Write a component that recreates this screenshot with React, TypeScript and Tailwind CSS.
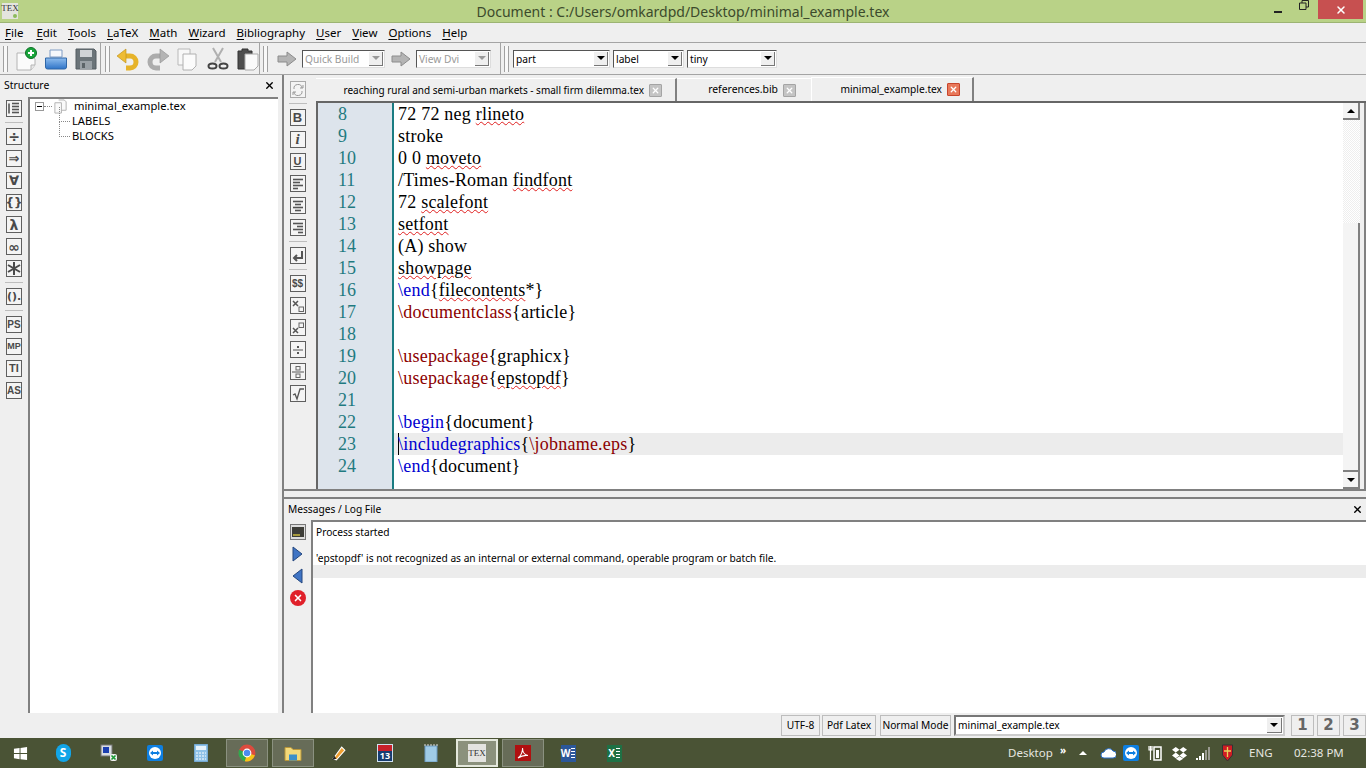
import type { ReactNode } from 'react';
import { X } from 'lucide-react';

const menus = ['File', 'Edit', 'Tools', 'LaTeX', 'Math', 'Wizard', 'Bibliography', 'User', 'View', 'Options', 'Help'];

type Tok = { t: string; c?: string; wavy?: boolean };
const BLUE = 'text-[#0000d0]';
const RED = 'text-[#8b0000]';

const lines: { n: number; toks: Tok[]; current?: boolean }[] = [
  { n: 8, toks: [{ t: '72 72 neg ' }, { t: 'rlineto', wavy: true }] },
  { n: 9, toks: [{ t: 'stroke' }] },
  { n: 10, toks: [{ t: '0 0 ' }, { t: 'moveto', wavy: true }] },
  { n: 11, toks: [{ t: '/Times-Roman ' }, { t: 'findfont', wavy: true }] },
  { n: 12, toks: [{ t: '72 ' }, { t: 'scalefont', wavy: true }] },
  { n: 13, toks: [{ t: 'setfont', wavy: true }] },
  { n: 14, toks: [{ t: '(A) show' }] },
  { n: 15, toks: [{ t: 'showpage', wavy: true }] },
  { n: 16, toks: [{ t: '\\end', c: BLUE }, { t: '{' }, { t: 'filecontents', wavy: true }, { t: '*}' }] },
  { n: 17, toks: [{ t: '\\documentclass', c: RED }, { t: '{article}' }] },
  { n: 18, toks: [] },
  { n: 19, toks: [{ t: '\\usepackage', c: RED }, { t: '{graphicx}' }] },
  { n: 20, toks: [{ t: '\\usepackage', c: RED }, { t: '{' }, { t: 'epstopdf', wavy: true }, { t: '}' }] },
  { n: 21, toks: [] },
  { n: 22, toks: [{ t: '\\begin', c: BLUE }, { t: '{document}' }] },
  {
    n: 23,
    current: true,
    toks: [{ t: '\\includegraphics', c: BLUE }, { t: '{' }, { t: '\\jobname.eps', c: RED }, { t: '}' }],
  },
  { n: 24, toks: [{ t: '\\end', c: BLUE }, { t: '{document}' }] },
];

function Grip() {
  return <div className="h-[26px] w-[5px] shrink-0 border-x border-[#a0a0a0] bg-[#f8f8f8]" />;
}

function Combo({ label, w, disabled }: { label: string; w: string; disabled?: boolean }) {
  return (
    <div className={`flex h-[18px] shrink-0 items-center border border-t-[#555] border-l-[#555] border-r-[#ddd] border-b-[#ddd] bg-white ${w}`}>
      <span className={`flex-1 pt-px pl-[2px] text-[10.2px] leading-none ${disabled ? 'text-[#9a9a9a]' : 'text-black'}`}>{label}</span>
      <span className="mr-px flex h-[14px] w-[14px] items-center justify-center border-r border-b border-[#777] bg-[#efefef]">
        <span className={`h-0 w-0 border-x-[4px] border-t-[4px] border-x-transparent ${disabled ? 'border-t-[#999]' : 'border-t-black'}`} />
      </span>
    </div>
  );
}

function SideBtn({ children, className = '' }: { children: ReactNode; className?: string }) {
  return (
    <div className={`flex h-[17px] w-[16px] items-center justify-center overflow-hidden border border-[#5f5f5f] bg-[#f4f4f4] text-[#4a4a4a] ${className}`}>
      {children}
    </div>
  );
}

function Sep() {
  return <div className="h-px w-[18px] bg-[#bdbdbd]" />;
}

function Lines({ rows }: { rows: string[] }) {
  return (
    <svg viewBox="0 0 14 14" className="h-[15px] w-[14px]">
      {rows.map((d, i) => (
        <path key={i} d={d} stroke="#555" strokeWidth="1.6" fill="none" />
      ))}
    </svg>
  );
}

const symbolText = 'font-["DejaVu_Sans",sans-serif] font-bold leading-none';
const sideLetters = 'font-["Liberation_Sans",sans-serif] font-bold leading-none';

function Arrow({ dir }: { dir: 'r' | 'l' }) {
  return (
    <svg viewBox="0 0 11 16" className="h-[16px] w-[11px]">
      <path d={dir === 'r' ? 'M1 1L10 8L1 15Z' : 'M10 1L1 8L10 15Z'} fill="#3f74c4" stroke="#24477f" strokeWidth="1" />
    </svg>
  );
}

function BuildArrow() {
  return (
    <svg viewBox="0 0 20 16" className="h-[16px] w-[20px] shrink-0">
      <path d="M1 5H10V1L19 8L10 15V11H1Z" fill="#b4b4b4" stroke="#8c8c8c" />
    </svg>
  );
}

function TabClose({ active }: { active?: boolean }) {
  return (
    <span className={`flex h-[13px] w-[13px] shrink-0 items-center justify-center rounded-[1px] border ${active ? 'border-[#c8452c] bg-[#e8785a]' : 'border-[#a4a4a4] bg-[#c4c4c4]'}`}>
      <X size={9} strokeWidth={3.5} className="text-white" />
    </span>
  );
}

function TaskIcon({ children, state, w = 'w-[46px]' }: { children: ReactNode; state?: 'open' | 'active'; w?: string }) {
  const box =
    state === 'active'
      ? 'border-2 border-[#e4e8dc] bg-[#8b917c]'
      : state === 'open'
        ? 'border border-[#8b9180] bg-[#676c58]'
        : '';
  return <div className={`flex h-[28px] shrink-0 items-center justify-center ${w} ${box}`}>{children}</div>;
}

function ScrollBtn({ up }: { up?: boolean }) {
  return (
    <div className="flex h-[17px] w-[17px] shrink-0 items-center justify-center border-r-2 border-b-2 border-[#808080] bg-[#f4f4f4]">
      <span className={`h-0 w-0 border-x-[4px] border-x-transparent ${up ? 'border-b-[4px] border-b-black' : 'border-t-[4px] border-t-black'}`} />
    </div>
  );
}

function TeamViewer({ className }: { className: string }) {
  return (
    <svg viewBox="0 0 16 16" className={className}>
      <rect width="16" height="16" rx="2" fill="#0e7fe1" />
      <circle cx="8" cy="8" r="6" fill="#fff" />
      <path d="M3 8L6 5.5V7H10V5.5L13 8L10 10.5V9H6V10.5Z" fill="#0e7fe1" />
    </svg>
  );
}

// Word and Excel share the same shape: letter on the left, ruled sheet on the right
function OfficeIcon({ letter, bg }: { letter: string; bg: string }) {
  return (
    <div className={`flex h-[17px] w-[15px] items-center justify-center text-[10px] font-bold leading-none ${bg}`}>
      {letter}
      <span className="ml-px h-[11px] w-[4px] bg-[repeating-linear-gradient(#ffffff_0_1px,transparent_1px_3px)]" />
    </div>
  );
}

export default function App() {
  return (
    <div className="flex h-[768px] w-[1366px] flex-col overflow-hidden bg-[#efefef] font-['Noto_Sans',sans-serif] text-[10.2px] text-black">
      {/* title bar */}
      <div className="relative flex h-[23px] shrink-0 items-center justify-center border-b border-[#9cb473] bg-[#b9d287]">
        <div className="absolute top-[3px] left-[2px] flex h-[16px] w-[16px] items-start justify-center bg-[#e4e4de] font-['Liberation_Serif',serif] text-[9px] leading-[11px] text-[#333]">
          TEX
          <span className="absolute right-px bottom-px h-[4px] w-[4px] rounded-full bg-[#8dbb5c]" />
        </div>
        <span className="text-[14px] text-[#3c4a2c]">Document : C:/Users/omkardpd/Desktop/minimal_example.tex</span>
        <div className="absolute top-0 right-[3px] flex h-[19px] items-center">
          <span className="mt-[5px] mr-[17px] h-[2px] w-[8px] bg-[#222]" />
          <svg viewBox="0 0 10 10" className="mr-[9px] mb-[9px] h-[10px] w-[10px]">
            <path d="M0.5 3H7V9.5H0.5Z M3 3V0.5H9.5V7H7" fill="none" stroke="#222" />
          </svg>
          <div className="flex h-[19px] w-[45px] items-center justify-center bg-[#c75050]">
            <X size={12} strokeWidth={3} className="text-white" />
          </div>
        </div>
      </div>

      {/* menu */}
      <div className="flex h-[19px] shrink-0 items-center gap-[11px] pl-[5px] text-[11.5px]">
        {menus.map((m, i) => (
          <span key={m} className={i === 0 ? 'mr-[2px]' : ''}>
            <span className="underline underline-offset-2">{m[0]}</span>
            {m.slice(1)}
          </span>
        ))}
      </div>

      {/* toolbar */}
      <div className="flex h-[33px] shrink-0 items-center border-y border-[#a4a4a4]">
        <div className="flex h-full w-[101px] shrink-0 items-center border-r border-[#a4a4a4] pl-[3px]">
          <Grip />
          <div className="ml-[6px] flex items-center gap-[6px]">
            <svg viewBox="0 0 24 24" className="h-[24px] w-[24px]">
              <path d="M3 6H15L21 12V18L17 23H3Z" fill="#fbfbfb" stroke="#b4b4b4" />
              <path d="M21 18H17V23" fill="#e8e8e8" stroke="#b4b4b4" />
              <circle cx="17" cy="6" r="5.5" fill="#19a53b" stroke="#0d6f25" />
              <path d="M17 3V9M14 6H20" stroke="#fff" strokeWidth="2" />
            </svg>
            <svg viewBox="0 0 24 24" className="h-[24px] w-[24px]">
              <defs>
                <linearGradient id="printBody" x1="0" y1="0" x2="0" y2="1">
                  <stop offset="0" stopColor="#8fbdee" />
                  <stop offset="1" stopColor="#2f74c8" />
                </linearGradient>
              </defs>
              <path d="M6 3H18V10H6Z" fill="#f6f8fb" stroke="#7f9cc4" />
              <path d="M1.5 11H22.5V20Q22.5 22 20.5 22H3.5Q1.5 22 1.5 20Z" fill="url(#printBody)" stroke="#2f67a8" />
            </svg>
            <svg viewBox="0 0 24 24" className="h-[24px] w-[24px]">
              <path d="M2 2H20L22 4V22H2Z" fill="#6b7479" stroke="#555d62" />
              <path d="M6 3H18V10H6Z" fill="#cfd3d6" />
              <path d="M6 14H18V22H6Z" fill="#9aa1a6" />
              <rect x="8" y="16" width="3" height="5" fill="#5c6468" />
            </svg>
          </div>
        </div>
        <div className="flex h-full w-[159px] shrink-0 items-center border-r border-[#a4a4a4] pl-[4px]">
          <Grip />
          <div className="ml-[6px] flex items-center gap-[6px]">
            <svg viewBox="0 0 24 24" className="h-[24px] w-[24px]">
              <path d="M9 9H14A6 6 0 0 1 14 21H10" fill="none" stroke="#e6b32a" strokeWidth="5" />
              <path d="M10 2L1 9L10 16Z" fill="#eebc35" stroke="#b98d16" strokeWidth="0.6" />
            </svg>
            <svg viewBox="0 0 24 24" className="h-[24px] w-[24px]">
              <path d="M15 9H10A6 6 0 0 0 10 21H14" fill="none" stroke="#acacac" strokeWidth="5" />
              <path d="M14 2L23 9L14 16Z" fill="#b4b4b4" stroke="#8f8f8f" strokeWidth="0.6" />
            </svg>
            <svg viewBox="0 0 24 24" className="h-[24px] w-[24px]">
              <path d="M2 2H14V18H2Z" fill="#f8f8f8" stroke="#b8b8b8" />
              <path d="M7 7H20V19L16 23H7Z" fill="#fbfbfb" stroke="#b0b0b0" />
            </svg>
            <svg viewBox="0 0 24 24" className="h-[24px] w-[24px]">
              <path d="M7 1L15 15M17 1L9 15" stroke="#b0b0b0" strokeWidth="2" fill="none" />
              <ellipse cx="6.5" cy="19" rx="4" ry="2.6" fill="none" stroke="#444" strokeWidth="2" />
              <ellipse cx="17.5" cy="19" rx="4" ry="2.6" fill="none" stroke="#444" strokeWidth="2" />
            </svg>
            <svg viewBox="0 0 24 24" className="h-[24px] w-[24px]">
              <path d="M2 4H6V2H12V4H16V22H2Z" fill="#4e4e4e" stroke="#333" />
              <path d="M9 7H22V19L18 23H9Z" fill="#fafafa" stroke="#aaa" />
            </svg>
          </div>
        </div>
        <div className="flex h-full w-[241px] shrink-0 items-center border-r border-[#a4a4a4] pl-[3px]">
          <Grip />
          <div className="ml-[9px]">
            <BuildArrow />
          </div>
          <div className="ml-[5px]">
            <Combo label="Quick Build" w="w-[83px]" disabled />
          </div>
          <div className="ml-[6px]">
            <BuildArrow />
          </div>
          <div className="ml-[5px]">
            <Combo label="View Dvi" w="w-[75px]" disabled />
          </div>
        </div>
        <div className="flex h-full items-center pl-[3px]">
          <Grip />
          <div className="ml-[4px] flex items-center gap-[3px]">
            <Combo label="part" w="w-[97px]" />
            <Combo label="label" w="w-[71px]" />
            <Combo label="tiny" w="w-[90px]" />
          </div>
        </div>
      </div>

      {/* main */}
      <div className="flex min-h-0 flex-1">
        {/* structure */}
        <div className="flex w-[278px] shrink-0 flex-col">
          <div className="flex h-[22px] shrink-0 items-center justify-between pr-[3px] pb-px pl-[4px] text-[10.4px]">
            <span>Structure</span>
            <X size={11} strokeWidth={3} />
          </div>
          <div className="flex min-h-0 flex-1">
            <div className="flex w-[28px] shrink-0 flex-col items-center gap-[5px] pt-[3px]">
              <SideBtn>
                <Lines rows={['M2 2V12', 'M5 2H12', 'M5 5H12', 'M5 8H12', 'M5 11H12']} />
              </SideBtn>
              <Sep />
              <SideBtn className={`text-[14px] ${symbolText}`}>÷</SideBtn>
              <SideBtn className={`text-[13px] ${symbolText}`}>⇒</SideBtn>
              <SideBtn className={`text-[13px] ${symbolText}`}>∀</SideBtn>
              <SideBtn className={`text-[12px] ${symbolText}`}>{'{}'}</SideBtn>
              <SideBtn className={`text-[14px] ${symbolText}`}>λ</SideBtn>
              <SideBtn className={`text-[14px] ${symbolText}`}>∞</SideBtn>
              <SideBtn>
                <svg viewBox="0 0 14 15" className="h-[15px] w-[14px]">
                  <path d="M7 1V14M1 4L13 11M13 4L1 11" stroke="#4a4a4a" strokeWidth="2" />
                </svg>
              </SideBtn>
              <Sep />
              <SideBtn className={`text-[11px] ${symbolText}`}>().</SideBtn>
              <Sep />
              <SideBtn className={`text-[10px] ${sideLetters}`}>PS</SideBtn>
              <SideBtn className={`text-[9px] ${sideLetters}`}>MP</SideBtn>
              <SideBtn className={`text-[11px] ${sideLetters}`}>TI</SideBtn>
              <SideBtn className={`text-[10px] ${sideLetters}`}>AS</SideBtn>
            </div>
            <div className="flex-1 border-t-2 border-l-2 border-[#808080] bg-white pl-[5px] text-[11.2px]">
              <div className="flex h-[15px] items-center">
                <span className="flex h-[9px] w-[9px] shrink-0 items-center justify-center border border-[#999]">
                  <span className="h-px w-[5px] bg-black" />
                </span>
                <span className="w-[8px] border-t border-dotted border-[#888]" />
                <svg viewBox="0 0 16 16" className="mr-[6px] ml-[1px] h-[15px] w-[15px]">
                  <path d="M2 4H9V15H2Z M6 1H12L14 3V12H9" fill="#fafafa" stroke="#b0b0b0" />
                </svg>
                <span>minimal_example.tex</span>
              </div>
              <div className="flex h-[15px] items-center pl-[24px]">
                <span className="mr-[2px] h-[15px] w-[11px] -translate-y-[7px] border-b border-l border-dotted border-[#888]" />
                <span>LABELS</span>
              </div>
              <div className="flex h-[15px] items-center pl-[24px]">
                <span className="mr-[2px] h-[15px] w-[11px] -translate-y-[7px] border-b border-l border-dotted border-[#888]" />
                <span>BLOCKS</span>
              </div>
            </div>
          </div>
        </div>

        {/* splitter */}
        <div className="w-[6px] shrink-0 border-r-2 border-[#808080]" />

        {/* right side */}
        <div className="flex min-w-0 flex-1 flex-col">
          <div className="flex h-[416px] shrink-0 border-b-2 border-[#808080]">
            <div className="flex w-[27px] shrink-0 flex-col items-center gap-[5px] pt-[6px]">
              <SideBtn className="border-[#aaa]">
                <svg viewBox="0 0 14 14" className="h-[14px] w-[14px]">
                  <path d="M3 6A4 4 0 0 1 11 5M11 8A4 4 0 0 1 3 9M9 5H12V2M5 9H2V12" stroke="#999" fill="none" />
                </svg>
              </SideBtn>
              <Sep />
              <SideBtn className={`text-[13px] ${sideLetters}`}>B</SideBtn>
              <SideBtn className="font-['Liberation_Serif',serif] text-[15px] font-bold italic leading-none">i</SideBtn>
              <SideBtn className={`text-[11px] underline ${sideLetters}`}>U</SideBtn>
              <SideBtn>
                <Lines rows={['M2 3H12', 'M2 6H9', 'M2 9H12', 'M2 12H7']} />
              </SideBtn>
              <SideBtn>
                <Lines rows={['M2 3H12', 'M4 6H10', 'M2 9H12', 'M4 12H10']} />
              </SideBtn>
              <SideBtn>
                <Lines rows={['M2 3H12', 'M6 6H12', 'M2 9H12', 'M7 12H12']} />
              </SideBtn>
              <Sep />
              <SideBtn>
                <svg viewBox="0 0 14 14" className="h-[14px] w-[14px]">
                  <path d="M11 2V9H4M6 6L3 9L6 12" stroke="#555" strokeWidth="2" fill="none" />
                </svg>
              </SideBtn>
              <Sep />
              <SideBtn className={`text-[10px] ${sideLetters}`}>$$</SideBtn>
              <SideBtn>
                <svg viewBox="0 0 14 14" className="h-[14px] w-[14px]">
                  <path d="M2 2L7 7M7 2L2 7" stroke="#555" strokeWidth="1.5" />
                  <rect x="8" y="8" width="4.5" height="4.5" fill="none" stroke="#666" />
                </svg>
              </SideBtn>
              <SideBtn>
                <svg viewBox="0 0 14 14" className="h-[14px] w-[14px]">
                  <path d="M2 7L7 12M7 7L2 12" stroke="#555" strokeWidth="1.5" />
                  <rect x="8" y="2" width="4.5" height="4.5" fill="none" stroke="#666" />
                </svg>
              </SideBtn>
              <SideBtn>
                <svg viewBox="0 0 14 14" className="h-[14px] w-[14px]">
                  <path d="M2 7H12" stroke="#555" />
                  <rect x="6" y="3" width="2" height="2" fill="#555" />
                  <rect x="6" y="9" width="2" height="2" fill="#555" />
                </svg>
              </SideBtn>
              <SideBtn>
                <svg viewBox="0 0 14 14" className="h-[14px] w-[14px]">
                  <path d="M1 7H13" stroke="#555" />
                  <rect x="5" y="1.5" width="4" height="3.5" fill="none" stroke="#666" />
                  <rect x="5" y="9" width="4" height="3.5" fill="none" stroke="#666" />
                </svg>
              </SideBtn>
              <SideBtn>
                <svg viewBox="0 0 14 14" className="h-[14px] w-[14px]">
                  <path d="M2 8L4 7L6 12L9 2H13" stroke="#555" strokeWidth="1.3" fill="none" />
                </svg>
              </SideBtn>
            </div>

            <div className="flex min-w-0 flex-1 flex-col pl-[5px]">
              {/* tabs */}
              <div className="flex h-[26px] shrink-0 items-end whitespace-nowrap pt-[3px] text-[10.2px]">
                <div className="flex h-[23px] w-[361px] shrink-0 items-center justify-end gap-[5px] border-t border-r-2 border-t-white border-r-[#808080] pr-[13px]">
                  <span className="text-[10px]">reaching rural and semi-urban markets - small firm dilemma.tex</span>
                  <TabClose />
                </div>
                <div className="flex h-[23px] w-[134px] shrink-0 items-center justify-end gap-[5px] border-t border-t-white pr-[15px]">
                  <span className="text-[10.4px]">references.bib</span>
                  <TabClose />
                </div>
                <div className="flex h-[24px] w-[163px] shrink-0 items-center justify-end gap-[5px] border-t border-l border-r-2 border-t-white border-l-white border-r-[#808080] pr-[12px]">
                  <span>minimal_example.tex</span>
                  <TabClose active />
                </div>
              </div>
              {/* editor */}
              <div className="flex min-h-0 flex-1 border-t-2 border-l-2 border-[#666] bg-white font-['Liberation_Serif',serif] text-[18px]">
                <div className="w-[76px] shrink-0 border-r-2 border-[#1a7c82] bg-[#dde4ec] pl-[20px]">
                  {lines.map((l) => (
                    <div key={l.n} className="h-[22px] text-left leading-[22px] text-[#1f7a80]">
                      {l.n}
                    </div>
                  ))}
                </div>
                <div className="relative min-w-0 flex-1">
                  {lines.map((l) => (
                    <div key={l.n} className={`flex h-[22px] items-start whitespace-pre pl-[4px] leading-[23px] tracking-[0.22px] ${l.current ? 'bg-[#ececec]' : ''}`}>
                      {l.current && <span className="-mr-px h-[22px] w-px bg-black" />}
                      {l.toks.map((tok, i) => (
                        <span key={i} className={`${tok.c ?? ''} ${tok.wavy ? 'underline decoration-[#e02020] decoration-wavy decoration-1' : ''}`}>
                          {tok.t}
                        </span>
                      ))}
                    </div>
                  ))}
                </div>
                <div className="flex w-[17px] shrink-0 flex-col">
                  <ScrollBtn up />
                  <div className="h-[103px] shrink-0 bg-[repeating-conic-gradient(#eeeeee_0_25%,#ffffff_0_50%)] bg-[length:2px_2px]" />
                  <div className="flex-1 border-r-2 border-b-2 border-[#808080] bg-[#f4f4f4]" />
                  <ScrollBtn />
                </div>
                <div className="w-[6px] shrink-0 border-r-2 border-[#808080] bg-[#efefef]" />
              </div>
            </div>
          </div>

          {/* messages */}
          <div className="mt-[6px] flex min-h-0 flex-1 flex-col border-t-2 border-[#808080]">
            <div className="flex h-[21px] shrink-0 items-center justify-between pr-[3px] pl-[4px]">
              <span>Messages / Log File</span>
              <X size={11} strokeWidth={3} />
            </div>
            <div className="flex min-h-0 flex-1">
              <div className="flex w-[27px] shrink-0 flex-col items-center gap-[6px] pt-[4px]">
                <div className="flex h-[16px] w-[16px] items-center justify-center border border-[#777] bg-[#ddd]">
                  <span className="flex h-[10px] w-[12px] items-end bg-[#3d3d38] pb-px pl-px">
                    <span className="h-[2px] w-[7px] bg-[#a89a3c]" />
                  </span>
                </div>
                <Arrow dir="r" />
                <Arrow dir="l" />
                <div className="flex h-[16px] w-[16px] items-center justify-center rounded-full bg-[#e0202a]">
                  <X size={10} strokeWidth={4} className="text-white" />
                </div>
              </div>
              <div className="flex-1 border-t-2 border-l-2 border-[#808080] bg-white">
                <div className="h-[4px]" />
                <div className="flex h-[13px] items-center pl-[3px]">Process started</div>
                <div className="h-[13px]" />
                <div className="flex h-[13px] items-center pl-[3px]">
                  'epstopdf' is not recognized as an internal or external command, operable program or batch file.
                </div>
                <div className="h-[13px] bg-[#ececec]" />
              </div>
            </div>
          </div>
        </div>
      </div>

      {/* status bar */}
      <div className="flex h-[25px] shrink-0 items-start justify-end whitespace-nowrap pt-[2px]">
        <div className="flex h-[21px] w-[39px] items-center justify-center border border-[#bdbdbd]">UTF-8</div>
        <div className="ml-[2px] flex h-[21px] w-[54px] items-center justify-center border border-[#bdbdbd]">Pdf Latex</div>
        <div className="ml-[4px] flex h-[21px] w-[71px] items-center justify-center border border-[#bdbdbd]">Normal Mode</div>
        <div className="ml-[3px] flex h-[21px] w-[331px] items-center border-2 border-t-[#777] border-l-[#777] border-r-[#ccc] border-b-[#ccc] bg-white">
          <span className="flex-1 pl-[2px]">minimal_example.tex</span>
          <span className="mr-px flex h-[15px] w-[15px] items-center justify-center border-r border-b border-[#777] bg-[#efefef]">
            <span className="h-0 w-0 border-x-[4px] border-t-[4px] border-x-transparent border-t-black" />
          </span>
        </div>
        {['1', '2', '3'].map((n, i) => (
          <div
            key={n}
            className={`flex h-[21px] w-[23px] items-center justify-center border border-[#bdbdbd] font-['DejaVu_Sans',sans-serif] text-[15px] font-bold leading-none text-[#666] ${i === 0 ? 'ml-[6px]' : 'ml-[3px]'}`}
          >
            {n}
          </div>
        ))}
      </div>

      {/* taskbar */}
      <div className="flex h-[30px] shrink-0 items-center bg-[#4a5335] text-white">
        <TaskIcon w="w-[40px]">
          <svg viewBox="0 0 16 16" className="h-[15px] w-[15px]">
            <path d="M1 3L7 2V7.5H1ZM8 2L15 1V7.5H8ZM1 8.5H7V14L1 13ZM8 8.5H15V15L8 14Z" fill="#fff" />
          </svg>
        </TaskIcon>
        <TaskIcon>
          <div className="flex h-[18px] w-[15px] items-center justify-center rounded-full bg-[#12a5e8] text-[12px] font-bold leading-none">S</div>
        </TaskIcon>
        <TaskIcon>
          <svg viewBox="0 0 18 18" className="h-[18px] w-[18px]">
            <rect x="1" y="1" width="11" height="11" fill="#d8dde2" stroke="#777" />
            <rect x="3" y="3" width="6" height="6" fill="#1b3fb0" />
            <rect x="10" y="10" width="7" height="7" rx="2" fill="#eee" />
            <path d="M11.5 11.5L15.5 15.5M15.5 11.5L11.5 15.5" stroke="#1a9a35" strokeWidth="1.6" />
          </svg>
        </TaskIcon>
        <TaskIcon>
          <TeamViewer className="h-[18px] w-[16px]" />
        </TaskIcon>
        <TaskIcon>
          <svg viewBox="0 0 14 18" className="h-[18px] w-[14px]">
            <rect width="14" height="18" fill="#8fc2e8" stroke="#5d90b8" />
            <rect x="2" y="2" width="10" height="4" fill="#e8f3fb" />
            <path d="M2 9H12M2 12H12M2 15H12" stroke="#fff" strokeDasharray="2 1" />
          </svg>
        </TaskIcon>
        <span className="w-[2px] shrink-0" />
        <TaskIcon state="open" w="w-[42px]">
          <svg viewBox="0 0 16 16" className="h-[18px] w-[18px]">
            <circle cx="8" cy="8" r="7.5" fill="#dd4b3e" />
            <path d="M8 8L15 10A7.5 7.5 0 0 1 6 15.3Z" fill="#f5c518" />
            <path d="M8 8L6 15.3A7.5 7.5 0 0 1 1 5Z" fill="#2da94f" />
            <circle cx="8" cy="8" r="3.4" fill="#4a8bf0" stroke="#fff" />
          </svg>
        </TaskIcon>
        <span className="w-[4px] shrink-0" />
        <TaskIcon state="open" w="w-[42px]">
          <svg viewBox="0 0 18 16" className="h-[17px] w-[18px]">
            <path d="M1 2H7L9 4H17V15H1Z" fill="#f3d97a" stroke="#b8963a" />
            <rect x="5" y="9" width="8" height="6" fill="#3d8fc9" />
          </svg>
        </TaskIcon>
        <TaskIcon w="w-[48px]">
          <svg viewBox="0 0 16 16" className="h-[17px] w-[17px]">
            <path d="M3 13L11 2L14 5L6 14Z" fill="#f0a030" stroke="#fff" />
            <path d="M2 14L4 10L6 13Z" fill="#222" />
          </svg>
        </TaskIcon>
        <TaskIcon>
          <div className="flex h-[18px] w-[16px] flex-col border border-[#cfe0f0] bg-[#c8202a]">
            <span className="mt-auto bg-[#173c70] text-center text-[9px] font-bold leading-[10px] text-white">13</span>
          </div>
        </TaskIcon>
        <TaskIcon>
          <svg viewBox="0 0 14 18" className="h-[18px] w-[14px]">
            <rect x="1" y="2" width="12" height="16" fill="#9fcbe6" stroke="#6a9ac0" />
            <path d="M1 2V0M4 2V0M7 2V0M10 2V0M13 2V0" stroke="#ddd" />
          </svg>
        </TaskIcon>
        <span className="w-[2px] shrink-0" />
        <TaskIcon state="active" w="w-[42px]">
          <div className="flex h-[18px] w-[18px] items-center justify-center bg-[#e4e4e0] font-['Liberation_Serif',serif] text-[9px] leading-none text-[#333]">TEX</div>
        </TaskIcon>
        <span className="w-[4px] shrink-0" />
        <TaskIcon state="open" w="w-[42px]">
          <svg viewBox="0 0 16 16" className="h-[16px] w-[16px]">
            <rect width="16" height="16" fill="#b01010" />
            <path d="M3 13C6 11 8 6 7.5 3C7.5 7 10 10 13 10.5C10 10 6 11 3 13Z" fill="none" stroke="#fff" strokeWidth="1.1" />
          </svg>
        </TaskIcon>
        <span className="w-px shrink-0" />
        <TaskIcon>
          <OfficeIcon letter="W" bg="bg-[#2b579a]" />
        </TaskIcon>
        <TaskIcon>
          <OfficeIcon letter="X" bg="bg-[#1e7145]" />
        </TaskIcon>
        <div className="flex-1" />
        <span className="w-[43px] whitespace-nowrap text-[11.5px] text-[#e6e6e0]">Desktop</span>
        <span className="mb-[6px] ml-[9px] w-[7px] text-[10px] font-bold leading-none">»</span>
        <span className="ml-[12px] h-0 w-0 border-x-[4px] border-b-[4px] border-x-transparent border-b-white" />
        <svg viewBox="0 0 16 16" className="ml-[13px] h-[16px] w-[16px]">
          <path d="M4 13A3 3 0 0 1 4 7A5 5 0 0 1 13 6A3.5 3.5 0 0 1 13 13Z" fill="#fff" stroke="#2a6fc9" />
        </svg>
        <TeamViewer className="ml-[7px] h-[16px] w-[16px]" />
        <svg viewBox="0 0 14 16" className="ml-[9px] h-[16px] w-[14px]">
          <rect x="6" y="2" width="7" height="13" fill="none" stroke="#fff" strokeWidth="1.5" />
          <rect x="8" y="5" width="3" height="8" fill="#fff" />
          <path d="M2.5 1V6M1 1V5H4V1M2.5 6V15" stroke="#fff" strokeWidth="1.2" fill="none" />
        </svg>
        <svg viewBox="0 0 16 16" className="ml-[10px] h-[15px] w-[15px]">
          <path d="M4 1L8 4L4 7L0 4ZM12 1L16 4L12 7L8 4ZM4 7L8 10L4 13L0 10ZM12 7L16 10L12 13L8 10ZM4 13.5L8 11L12 13.5L8 16Z" fill="#fff" />
        </svg>
        <svg viewBox="0 0 14 16" className="ml-[9px] h-[16px] w-[14px]">
          <path d="M0 13H2V15H0ZM3 11H5V15H3ZM6 8H8V15H6Z" fill="#fff" />
          <path d="M9 5H11V15H9ZM12 2H14V15H12Z" fill="#9a9a90" />
        </svg>
        <svg viewBox="0 0 11 18" className="ml-[12px] h-[18px] w-[11px]">
          <path d="M0.5 1H10.5V11L5.5 17L0.5 11Z" fill="#d01c24" stroke="#333" />
          <path d="M5.5 3V13M2 7H9" stroke="#e8d45a" strokeWidth="1.3" />
        </svg>
        <span className="ml-[16px] w-[23px] text-[11.5px] text-[#e6e6e0]">ENG</span>
        <span className="mr-[24px] ml-[22px] w-[48px] whitespace-nowrap text-[11.5px] text-[#e6e6e0]">02:38 PM</span>
      </div>
    </div>
  );
}
